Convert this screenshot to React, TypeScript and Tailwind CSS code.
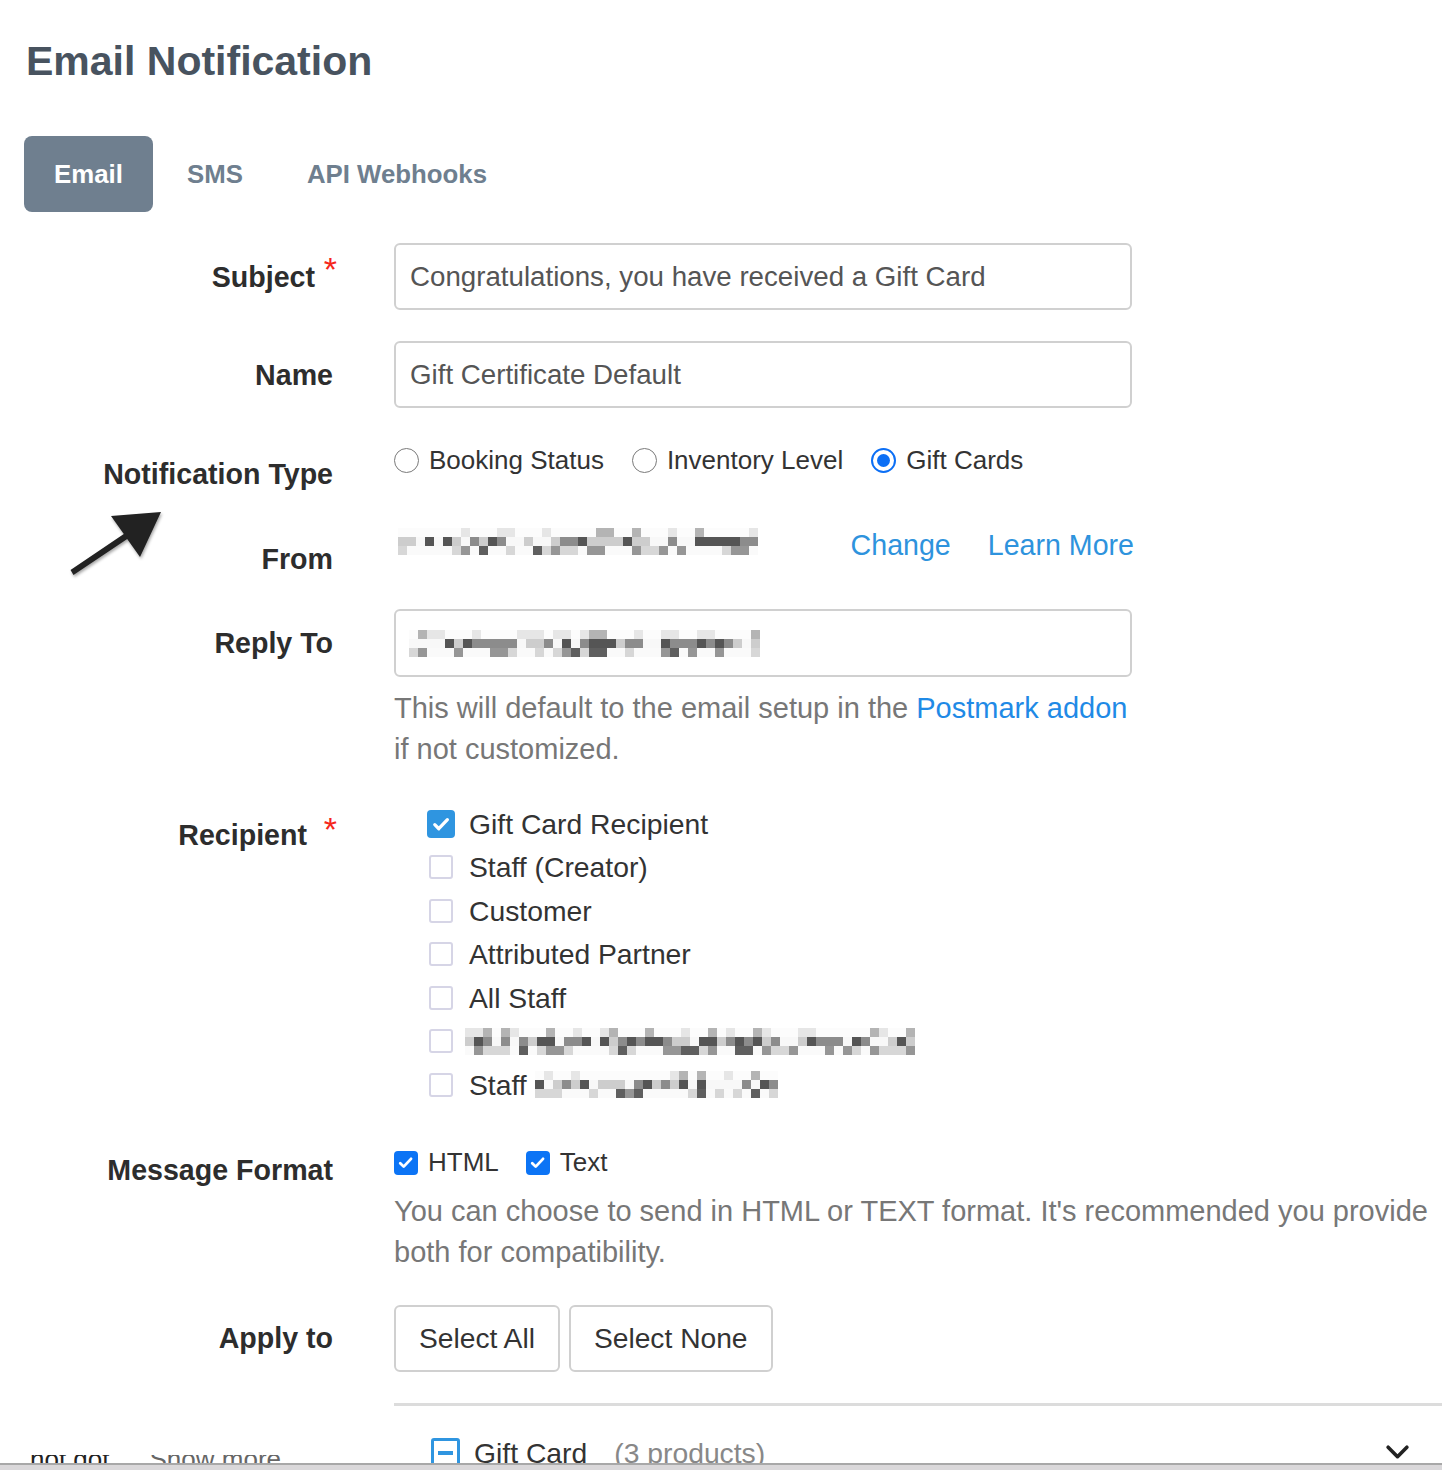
import React from "react";

const LABEL = "w-[333px] shrink-0 text-[28.6px] font-bold text-[#2d2d2d] text-right leading-[42px]";
const INPUT = "w-[738px] border-2 border-[#d0d0d0] rounded-[6px] flex items-center";

function seeded(seed: number) {
  let s = seed;
  return () => {
    s = (s * 9301 + 49297) % 233280;
    return s / 233280;
  };
}

// pixelated (blurred-out) text block
function Pixelated({ cols, seed, cell = 9, rows = 3 }: { cols: number; seed: number; cell?: number; rows?: number }) {
  const rnd = seeded(seed);
  const grid: number[][] = [];
  for (let r = 0; r < rows; r++) {
    const row: number[] = [];
    for (let c = 0; c < cols; c++) {
      const v = rnd();
      let g: number;
      if (r === 0) g = v < 0.65 ? 252 : v < 0.88 ? 230 : 180;
      else if (r === rows - 1) g = v < 0.45 ? 250 : v < 0.7 ? 215 : v < 0.9 ? 150 : 95;
      else g = v < 0.3 ? 248 : v < 0.5 ? 205 : v < 0.75 ? 140 : 85;
      row.push(g);
    }
    grid.push(row);
  }
  return (
    <div className="flex flex-col">
      {grid.map((row, i) => (
        <div key={i} className="flex">
          {row.map((g, j) => (
            <div key={j} style={{ width: cell, height: cell, background: `rgb(${g},${g},${g})` }} />
          ))}
        </div>
      ))}
    </div>
  );
}

function Check({ size = "w-[28px] h-[28px]", bg = "bg-[#2f95e0]", rounded = "rounded-[4px]" }: { size?: string; bg?: string; rounded?: string }) {
  return (
    <span className={`${size} ${bg} ${rounded} flex items-center justify-center shrink-0`}>
      <svg viewBox="0 0 16 16" className="w-[72%] h-[72%]" fill="none" stroke="white" strokeWidth="2.6" strokeLinecap="round" strokeLinejoin="round">
        <path d="M3 8.5l3.2 3.2L13 4.5" />
      </svg>
    </span>
  );
}

function Empty() {
  return <span className="w-[24px] h-[24px] rounded-[3px] border-2 border-[#d6d5e6] bg-white shrink-0 ml-[2px] mr-[2px]" />;
}

function Radio({ checked, label }: { checked?: boolean; label: string }) {
  return (
    <label className="flex items-center gap-[10px]">
      {checked ? (
        <span className="w-[25px] h-[25px] rounded-full border-[2px] border-[#0c6ff5] flex items-center justify-center">
          <span className="w-[13px] h-[13px] rounded-full bg-[#0c6ff5]" />
        </span>
      ) : (
        <span className="w-[25px] h-[25px] rounded-full border border-[#7a7a7a] bg-white" />
      )}
      <span>{label}</span>
    </label>
  );
}

function Recipient({ children, checked }: { children: React.ReactNode; checked?: boolean }) {
  return (
    <div className="flex items-center h-[43.5px] gap-[14px]">
      {checked ? <Check /> : <Empty />}
      <div className="flex items-center">{children}</div>
    </div>
  );
}

function Star() {
  return <span className="text-[#f5271c] text-[34px] font-normal leading-none">*</span>;
}

export default function App() {
  return (
    <div className="relative w-[1442px] h-[1470px] overflow-hidden bg-white font-['Liberation_Sans',Arial,sans-serif] text-[#333]">
      <div className="pl-[24px] pt-[33px]">
        <h1 className="text-[41px] leading-[56px] font-bold text-[#48535f] pl-[2px]">Email Notification</h1>

        {/* tabs */}
        <div className="flex items-center mt-[47px] text-[25.8px] font-bold">
          <div className="h-[76px] w-[129px] rounded-[8px] bg-[#6f7f8f] text-white flex items-center justify-center">Email</div>
          <div className="text-[#6f7f8f] ml-[34px]">SMS</div>
          <div className="text-[#6f7f8f] ml-[64px]">API Webhooks</div>
        </div>
      </div>

      <div className="flex flex-col">
        {/* Subject */}
        <div className="flex gap-[61px] mt-[31px] items-center">
          <div className={`${LABEL} pr-[18px] relative`}>
            Subject
            <span className="absolute right-[-4px] top-[-6px]"><Star /></span>
          </div>
          <div className={`${INPUT} h-[67px] pl-[14px] text-[27.7px] text-[#555]`}>
            Congratulations, you have received a Gift Card
          </div>
        </div>

        {/* Name */}
        <div className="flex gap-[61px] mt-[31px] items-center">
          <div className={LABEL}>Name</div>
          <div className={`${INPUT} h-[67px] pl-[14px] text-[27.7px] text-[#555]`}>Gift Certificate Default</div>
        </div>

        {/* Notification Type */}
        <div className="flex gap-[61px] mt-[31px] items-start">
          <div className={`${LABEL} mt-[14px]`}>Notification Type</div>
          <div className="flex items-center h-[42px] gap-[28px] text-[26px] text-[#333]">
            <Radio label="Booking Status" />
            <Radio label="Inventory Level" />
            <Radio checked label="Gift Cards" />
          </div>
        </div>

        {/* From */}
        <div className="flex gap-[61px] mt-[29px] items-start">
          <div className={`${LABEL} mt-[14px]`}>From</div>
          <div className="w-[740px] h-[42px] flex items-center justify-between">
            <div className="ml-[4px] -mt-[8px]">
              <Pixelated cols={40} seed={7} />
            </div>
            <div className="flex items-center gap-[37px] text-[28.6px] text-[#2e93dd]">
              <span>Change</span>
              <span>Learn More</span>
            </div>
          </div>
        </div>

        {/* Reply To */}
        <div className="flex gap-[61px] mt-[29px] items-start">
          <div className={`${LABEL} mt-[13px]`}>Reply To</div>
          <div>
            <div className={`${INPUT} h-[68px] pl-[13px]`}>
              <Pixelated cols={39} seed={23} />
            </div>
            <p className="mt-[11px] text-[29px] leading-[41px] text-[#777] whitespace-nowrap">
              This will default to the email setup in the <span className="text-[#1f8ae6]">Postmark addon</span>
              <br />
              if not customized.
            </p>
          </div>
        </div>

        {/* Recipient */}
        <div className="flex gap-[61px] mt-[32px] items-start">
          <div className={`${LABEL} mt-[12px] pr-[26px] relative`}>
            Recipient
            <span className="absolute right-[-4px] top-[-4px]"><Star /></span>
          </div>
          <div className="pl-[33px] text-[28.3px] text-[#333]">
            <Recipient checked>Gift Card Recipient</Recipient>
            <Recipient>Staff (Creator)</Recipient>
            <Recipient>Customer</Recipient>
            <Recipient>Attributed Partner</Recipient>
            <Recipient>All Staff</Recipient>
            <Recipient>
              <div className="-ml-[4px]">
                <Pixelated cols={50} seed={91} />
              </div>
            </Recipient>
            <Recipient>
              <span>Staff</span>
              <div className="ml-[8px]">
                <Pixelated cols={27} seed={55} />
              </div>
            </Recipient>
          </div>
        </div>

        {/* Message Format */}
        <div className="flex gap-[61px] mt-[35px] items-start">
          <div className={`${LABEL} mt-[7px]`}>Message Format</div>
          <div>
            <div className="flex items-center h-[42px] text-[26px] text-[#333]">
              <Check size="w-[24px] h-[24px]" bg="bg-[#0c74f5]" rounded="rounded-[4px]" />
              <span className="ml-[10px]">HTML</span>
              <span className="ml-[27px]">
                <Check size="w-[24px] h-[24px]" bg="bg-[#0c74f5]" rounded="rounded-[4px]" />
              </span>
              <span className="ml-[10px]">Text</span>
            </div>
            <p className="mt-[7px] text-[29px] leading-[41px] text-[#777] whitespace-nowrap">
              You can choose to send in HTML or TEXT format. It's recommended you provide
              <br />
              both for compatibility.
            </p>
          </div>
        </div>

        {/* Apply to */}
        <div className="flex gap-[61px] mt-[32px] items-center">
          <div className={LABEL}>Apply to</div>
          <div className="flex gap-[9px] text-[28.2px] text-[#333]">
            <button className="h-[67px] px-[23px] border-2 border-[#d0d0d0] rounded-[6px] bg-white">Select All</button>
            <button className="h-[67px] px-[23px] border-2 border-[#d0d0d0] rounded-[6px] bg-white">Select None</button>
          </div>
        </div>

        {/* products */}
        <div className="ml-[394px] mt-[31px] border-t-[3px] border-[#dcdcdc]">
          <div className="flex items-center justify-between pl-[37px] pr-[32px] pt-[26px]">
            <div className="flex items-center text-[28.3px]">
              <span className="w-[29px] h-[30px] border-[3px] border-[#2f95e0] rounded-[3px] flex items-center justify-center">
                <span className="w-[15px] h-[4px] bg-[#2f95e0]" />
              </span>
              <span className="ml-[14px] text-[#333]">Gift Card</span>
              <span className="ml-[27px] text-[#888]">(3 products)</span>
            </div>
            <svg viewBox="0 0 24 16" className="w-[25px] h-[17px]" fill="none" stroke="#222" strokeWidth="3.5" strokeLinecap="round" strokeLinejoin="round">
              <path d="M3 3l9 9 9-9" />
            </svg>
          </div>
        </div>
      </div>

      {/* annotation arrow */}
      <svg className="absolute left-[60px] top-[505px] w-[110px] h-[80px]" viewBox="0 0 110 80" style={{ filter: "drop-shadow(1px 2px 1.5px rgba(0,0,0,0.35))" }}>
        <path d="M10.5 65 L63.8 29 L51 11 L101 7 L80 52 L67.2 34 L13.5 70 Z" fill="#222" />
      </svg>

      {/* clipped footer text under the bottom bar */}
      <div className="absolute left-[30px] top-[1455px] h-[8px] overflow-hidden flex gap-[40px] text-[26px] leading-[26px]">
        <span className="-mt-[9px] text-[#222]">hot got</span>
        <span className="-mt-[9px] text-[#666]">Show more</span>
      </div>
      <div className="absolute left-0 right-0 bottom-0 h-[7px] bg-[#dad8da] border-t-2 border-[#a8a8a8]" />
    </div>
  );
}
